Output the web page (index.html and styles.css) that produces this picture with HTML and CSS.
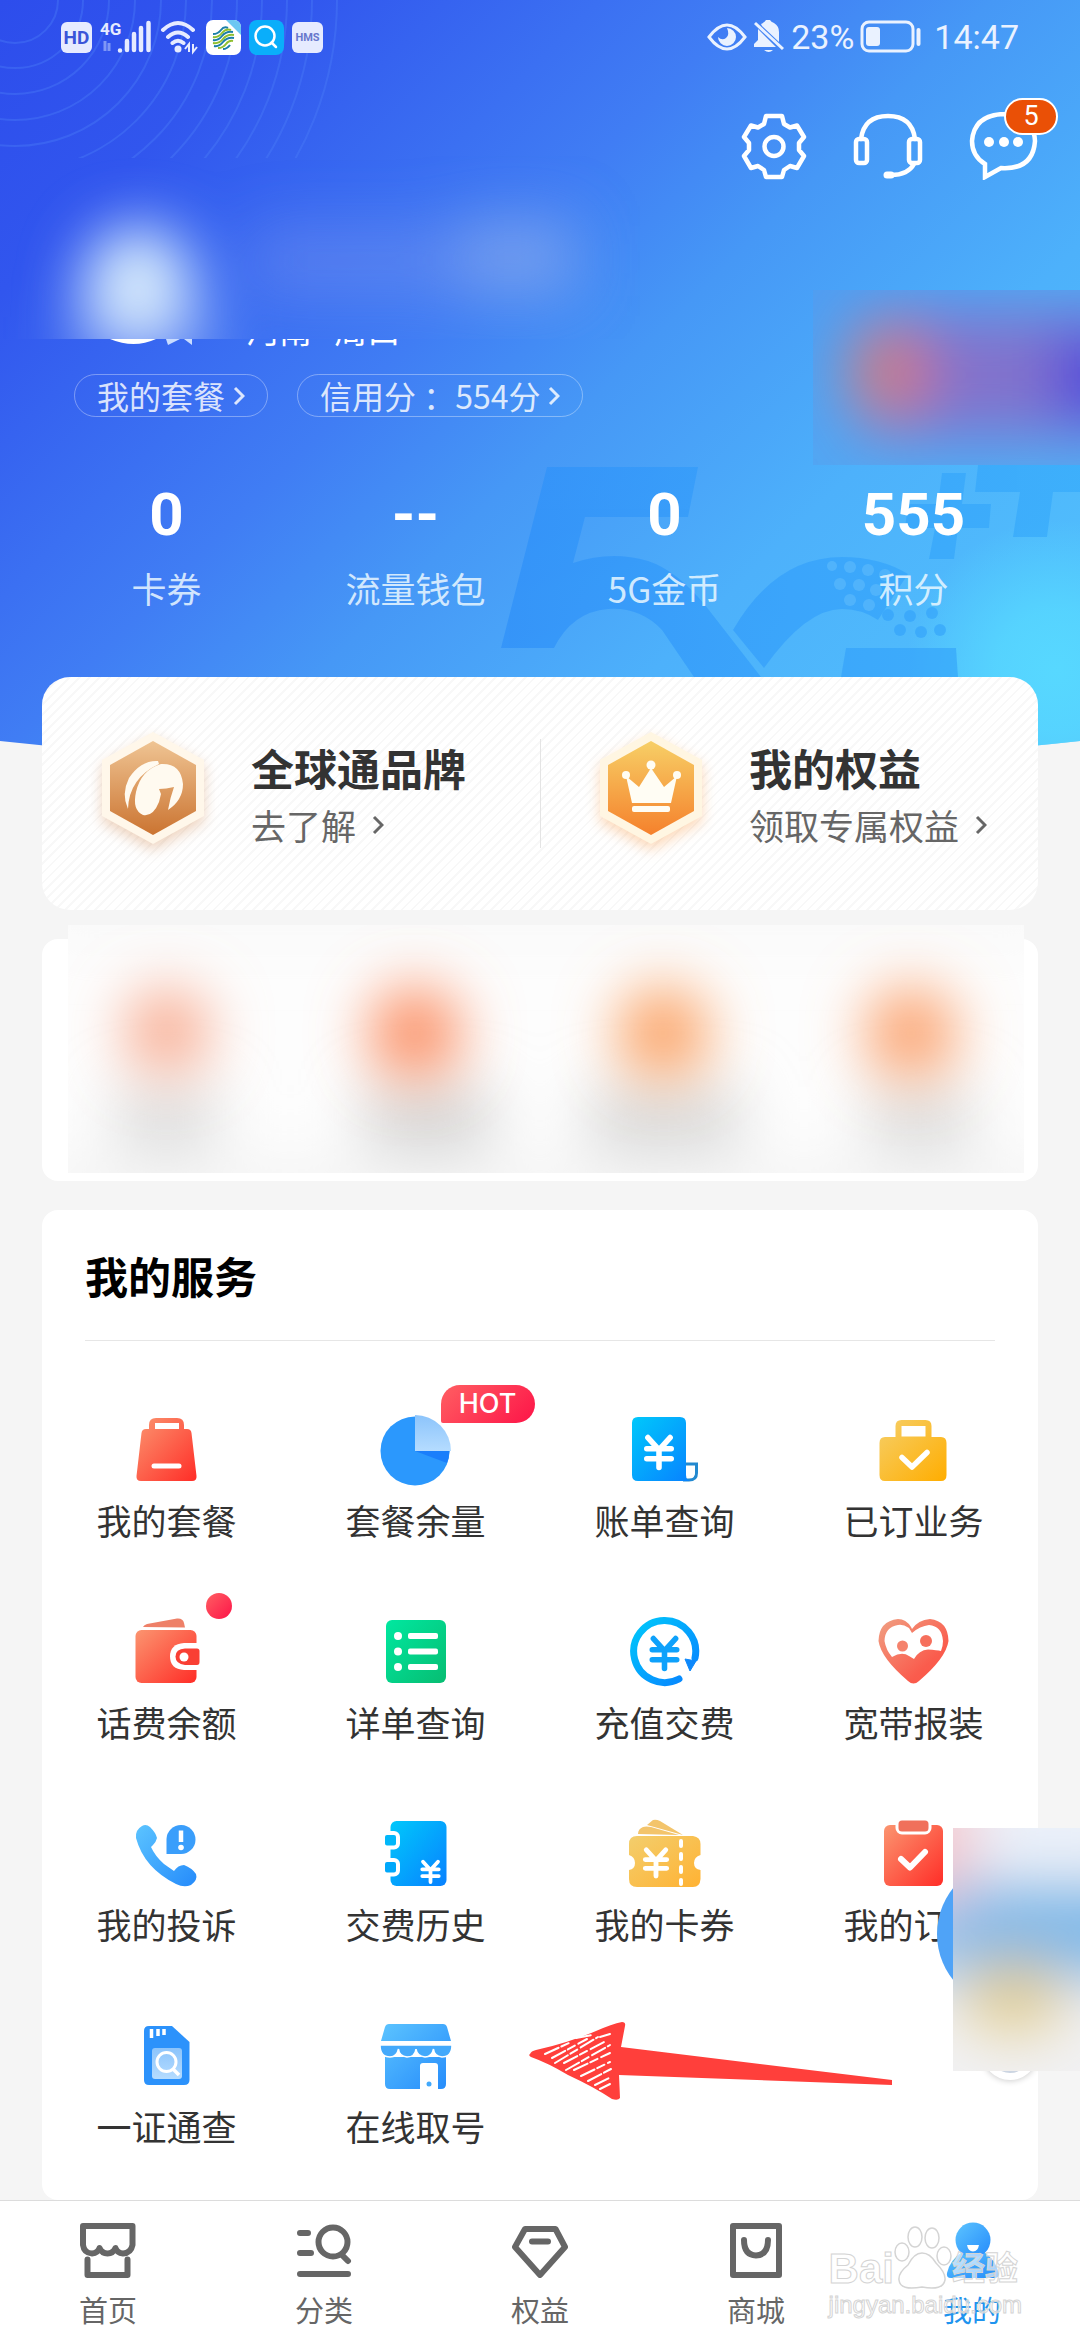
FILE: index.html
```html
<!DOCTYPE html>
<html lang="zh-CN">
<head>
<meta charset="utf-8">
<meta name="viewport" content="width=device-width, initial-scale=1">
<title>我的</title>
<link rel="stylesheet" href="styles.css">
</head>
<body>
<svg class="defs" width="0" height="0" aria-hidden="true">
  <defs>
    <linearGradient id="red" x1="0" y1="0" x2="1" y2="1"><stop offset="0" stop-color="#fb9570"/><stop offset="1" stop-color="#ff2d27"/></linearGradient>
    <linearGradient id="coral" x1="0" y1="0" x2="1" y2="1"><stop offset="0" stop-color="#f0a083"/><stop offset=".7" stop-color="#fa5c4d"/><stop offset="1" stop-color="#fb5446"/></linearGradient>
    <linearGradient id="blue" x1="0" y1="0" x2="1" y2="1"><stop offset="0" stop-color="#00c8fb"/><stop offset="1" stop-color="#0881ff"/></linearGradient>
    <linearGradient id="sky" x1="0" y1="0" x2="1" y2="1"><stop offset="0" stop-color="#5cc4ff"/><stop offset="1" stop-color="#258bfb"/></linearGradient>
    <linearGradient id="pale" x1="0" y1="0" x2="0" y2="1"><stop offset="0" stop-color="#8cc4fb"/><stop offset="1" stop-color="#b5dcff"/></linearGradient>
    <linearGradient id="gold" x1="0" y1="0" x2="1" y2="1"><stop offset="0" stop-color="#f6cf68"/><stop offset="1" stop-color="#ffad00"/></linearGradient>
    <linearGradient id="amber" x1="0" y1="0" x2="1" y2="1"><stop offset="0" stop-color="#f3ce6d"/><stop offset="1" stop-color="#ffb233"/></linearGradient>
    <linearGradient id="green" x1="0" y1="0" x2="1" y2="1"><stop offset="0" stop-color="#00e8a0"/><stop offset="1" stop-color="#07bd72"/></linearGradient>
    <linearGradient id="bronze" x1="0" y1="0" x2="0" y2="1"><stop offset="0" stop-color="#efc493"/><stop offset="1" stop-color="#cb7431"/></linearGradient>
    <linearGradient id="crown" x1="0" y1="0" x2="0" y2="1"><stop offset="0" stop-color="#f7cf66"/><stop offset="1" stop-color="#f5812c"/></linearGradient>
    <linearGradient id="mark" gradientUnits="userSpaceOnUse" x1="500" y1="0" x2="1080" y2="0"><stop offset="0" stop-color="#2d8ff9"/><stop offset=".5" stop-color="#34a0fb"/><stop offset="1" stop-color="#36abfb"/></linearGradient>
    <filter id="haze" x="-150%" y="-150%" width="400%" height="400%"><feGaussianBlur stdDeviation="30"/></filter>
    <symbol id="yen" viewBox="-16 -18 32 36"><path d="M-10 -13 0 -2 10 -13M0 -2V14M-11 -3H11M-11 6H11" fill="none" stroke="currentColor" stroke-width="5" stroke-linecap="round"/></symbol>
  </defs>
</svg>

<div class="page">
  <svg class="backdrop" viewBox="0 0 1080 760" aria-hidden="true">
    <defs>
      <linearGradient id="sea" gradientUnits="userSpaceOnUse" x1="0" y1="0" x2="920" y2="920">
        <stop offset="0" stop-color="#2d4dec"/><stop offset=".16" stop-color="#3156ee"/><stop offset=".41" stop-color="#407df4"/><stop offset=".54" stop-color="#4698f6"/><stop offset=".72" stop-color="#4db1fb"/><stop offset="1" stop-color="#52c4fd"/>
      </linearGradient>
      <radialGradient id="glow" gradientUnits="userSpaceOnUse" cx="1056" cy="670" r="150"><stop offset="0" stop-color="#57d8ff"/><stop offset=".4" stop-color="#57d8ff" stop-opacity=".8"/><stop offset="1" stop-color="#57d8ff" stop-opacity="0"/></radialGradient>
      <clipPath id="ringclip"><rect width="345" height="158"/></clipPath>
      <clipPath id="sheet"><path d="M0 0H1080V741Q540 800 0 741Z"/></clipPath>
    </defs>
    <g clip-path="url(#sheet)">
      <rect width="1080" height="800" fill="url(#sea)"/>
      <rect width="1080" height="800" fill="url(#glow)"/>
      <g fill="url(#mark)" opacity=".7">
        <path d="M547 467H698L688 517H585L573 563Q611 550 648 561Q676 570 705 605L761 677H694L662 630Q640 607 608 609Q572 612 554 648H501Z"/>
        <path d="M733 630Q775 557 842 557Q880 557 908 574L878 620Q862 609 842 609Q806 609 764 668Z"/>
        <path d="M846 648H956L958 677H841Z"/>
        <path d="M978 465H1080V492H1053L1047 537H1013L1020 492H975Z"/>
        <path d="M942 473H966L962 504H991L989 528H958L954 559H929L935 528H905L908 504H938Z"/>
        <circle cx="888" cy="615" r="6"/><circle cx="910" cy="616" r="6"/><circle cx="932" cy="613" r="6"/><circle cx="900" cy="630" r="6"/><circle cx="921" cy="632" r="6"/><circle cx="940" cy="630" r="6"/>
      </g>
      <g fill="#59b9fc" opacity=".7"><circle cx="832" cy="566" r="5"/><circle cx="850" cy="567" r="6"/><circle cx="868" cy="570" r="6"/><circle cx="885" cy="575" r="6"/><circle cx="840" cy="584" r="6"/><circle cx="859" cy="585" r="6"/><circle cx="876" cy="590" r="6"/><circle cx="850" cy="600" r="6"/><circle cx="869" cy="605" r="6"/></g>
      <g clip-path="url(#ringclip)" fill="none" stroke="#4a7cf8" stroke-opacity=".4" stroke-width="2">
        <circle cx="15" cy="0" r="43"/><circle cx="15" cy="0" r="68"/><circle cx="15" cy="0" r="94"/><circle cx="15" cy="0" r="120"/><circle cx="15" cy="0" r="146"/><circle cx="15" cy="0" r="171"/><circle cx="15" cy="0" r="197"/><circle cx="15" cy="0" r="222"/><circle cx="15" cy="0" r="247"/><circle cx="15" cy="0" r="272"/><circle cx="15" cy="0" r="297"/><circle cx="15" cy="0" r="322"/>
      </g>
    </g>
  </svg>

  <header class="hero">
    <div class="status">
      <div class="status__side status__side--left">
        <span class="chip chip--hd">HD</span>
        <svg width="52" height="36" viewBox="0 0 52 36"><text x="0" y="16" class="net">4G</text><path d="M5 22v10M9 32V24" stroke="#7f97f6" stroke-width="3"/><path d="M20 31.500v.1M27 31v-9M34 31v-16M41 31v-22M48.500 31v-27" stroke="#e6ebff" stroke-width="4.500" stroke-linecap="round"/></svg>
        <svg width="38" height="36" viewBox="0 0 38 36"><g fill="none" stroke="#e6ebff" stroke-width="4" stroke-linecap="round"><path d="M3 11Q18 -3 33 11M8 18Q18 9 28 18M12.500 24Q18 19.500 23.500 24"/></g><circle cx="18" cy="30" r="3.500" fill="#e6ebff"/><path d="M29 33v-8l-4 5M33 25v8l4-5" stroke="#e6ebff" stroke-width="2" fill="none"/></svg>
        <svg width="35" height="35" viewBox="0 0 35 35"><rect width="35" height="35" rx="7" fill="#fff"/><path d="M20 0h8a7 7 0 0 1 7 7v8Z" fill="#6cc7f2"/><g fill="none" stroke-width="2"><path d="M7 14Q12 14 15 10T22 8M7 20Q12 21 16 16T27 12M8 26Q13 27 17 22T28 18M17 29Q21 29 24 25" stroke="#1b7fa8"/><path d="M7 17Q12 18 16 13T25 10M7 23Q13 24 17 19T28 15M12 28Q17 28 20 24T27 21" stroke="#8fbf2f"/></g></svg>
        <svg width="35" height="35" viewBox="0 0 35 35"><rect width="35" height="35" rx="8" fill="#0aaefa"/><circle cx="16" cy="16" r="9.500" fill="none" stroke="#fff" stroke-width="2.500"/><path d="M22.500 22.500 27 27" stroke="#fff" stroke-width="2.500" stroke-linecap="round"/></svg>
        <span class="chip chip--hms">HMS</span>
      </div>
      <div class="status__side">
        <svg width="40" height="30" viewBox="0 0 40 30"><path d="M2 15Q20 -9 38 15Q20 39 2 15Z" fill="none" stroke="#eaf2ff" stroke-width="3"/><path d="M20 6a9 9 0 1 1-9 9q4 4 8 1t1-10Z" fill="#eaf2ff"/></svg>
        <svg width="32" height="34" viewBox="0 0 32 34"><path d="M8 4Q12 2 13 0h4q1 2 4 3 5 3 5 9v10L9 6ZM5 9 23 27H1v-3l4-4ZM11 30h9q-4 4-9 0Z" fill="#eaf2ff"/><path d="M2 3 30 29" stroke="#eaf2ff" stroke-width="3"/></svg>
        <span class="status__text">23%</span>
        <svg width="62" height="34" viewBox="0 0 62 34"><rect x="2" y="2" width="51" height="29" rx="7" fill="none" stroke="#eaf2ff" stroke-width="3"/><rect x="6" y="7" width="14" height="19" rx="3" fill="#eaf2ff"/><path d="M58.500 10v14" stroke="#eaf2ff" stroke-width="4" stroke-linecap="round"/></svg>
        <time class="status__text">14:47</time>
      </div>
    </div>

    <div class="actions">
      <button type="button" class="icon-btn" aria-label="设置"><svg width="68" height="68" viewBox="0 0 68 68" fill="none" stroke="#fff" stroke-width="4.500" stroke-linejoin="round"><path d="M26 4H42L44 12L50 15.500L57 13.500L64 25L59 31V38L64 44L57 56L50 54L44 58L42 65H26L24 58L18 54L11 56L4 44L9 38V31L4 25L11 13.500L18 15.500L24 12Z"/><circle cx="34" cy="34.500" r="9.500"/></svg></button>
      <button type="button" class="icon-btn" aria-label="客服"><svg width="72" height="68" viewBox="0 0 72 68" fill="none" stroke="#fff" stroke-width="4.500" stroke-linecap="round"><path d="M9 27Q12 4 36 4T63 27"/><rect x="4" y="27" width="11" height="24" rx="3"/><rect x="57" y="27" width="11" height="24" rx="3"/><path d="M62 52Q56 63 39 63"/><path d="M35 63h4" stroke-width="7"/></svg></button>
      <button type="button" class="icon-btn" aria-label="消息"><svg width="72" height="68" viewBox="0 0 72 68"><path d="M17 52Q4 44 4 29Q6 3 36 2Q66 4 67 29Q65 58 33 56L17 65Z" fill="none" stroke="#fff" stroke-width="4.500"/><g fill="#fff"><circle cx="21" cy="30" r="5"/><circle cx="36" cy="30" r="5"/><circle cx="50" cy="30" r="5"/></g></svg><span class="count">5</span></button>
    </div>

    <div class="profile">
      <svg class="profile__haze" viewBox="0 0 640 183" width="640" height="183" aria-hidden="true"><g filter="url(#haze)"><ellipse cx="138" cy="132" rx="56" ry="62" fill="#d8ecfc"/><rect x="70" y="160" width="150" height="60" fill="#b4c8f8" opacity=".4"/><rect x="250" y="70" width="330" height="70" fill="#8a9eee" opacity=".35"/><rect x="460" y="60" width="110" height="80" fill="#96b9eb" opacity=".4"/></g></svg>
      <svg class="promo-haze" viewBox="0 0 267 175" width="267" height="175" aria-hidden="true"><rect width="267" height="175" fill="#5b9ae8" opacity=".4"/><g filter="url(#haze)"><rect x="50" y="24" width="280" height="122" fill="#8272cc"/><ellipse cx="76" cy="82" rx="40" ry="48" fill="#d07a80"/><rect x="245" y="50" width="80" height="75" fill="#4442dc"/></g></svg>
    </div>
    <div class="place">
      <svg width="100" height="10" viewBox="0 0 100 10" aria-hidden="true"><path d="M10 0H56Q34 10 10 0Z" fill="#fff"/><path d="M66 0H92V6L84 0H80L68 6Z" fill="#c9dcff"/></svg>
      <span class="place__text">河南&nbsp;&nbsp; 周口</span>
    </div>
    <div class="pills">
      <a class="pill" href="#plan">我的套餐<svg width="12" height="20" viewBox="0 0 12 20"><path d="M2 2 10 10 2 18"/></svg></a>
      <a class="pill" href="#credit">信用分 ：554分<svg width="12" height="20" viewBox="0 0 12 20"><path d="M2 2 10 10 2 18"/></svg></a>
    </div>
    <ul class="stats">
      <li><a href="#coupon"><b>0</b><span>卡券</span></a></li>
      <li><a href="#wallet"><b>--</b><span>流量钱包</span></a></li>
      <li><a href="#coin"><b>0</b><span>5G金币</span></a></li>
      <li><a href="#points"><b>555</b><span>积分</span></a></li>
    </ul>
  </header>

  <main class="main">
    <section class="brand">
      <a class="brand__item" href="#brand">
        <svg class="hex hex--bronze" width="120" height="124" viewBox="0 0 120 124"><path d="M60 6 111 34V90L60 118 9 90V34Z" fill="#fff7ea"/><path d="M60 15 103 39V85L60 109 17 85V39Z" fill="url(#bronze)"/><path d="M65 35Q48 34 36 52Q28 68 35 83Q36 52 66 38Z" fill="#fffaf0"/><path d="M68 38Q48 44 43 66Q39 84 50 89Q60 91 66 76L68 68L66 63Q73 63 81 61Q77 72 75 84Q90 74 90 58Q88 37 68 38Z" fill="#fffaf0"/></svg>
        <span class="brand__text"><strong>全球通品牌</strong><span>去了解<svg width="12" height="20" viewBox="0 0 12 20"><path d="M2 2 10 10 2 18"/></svg></span></span>
      </a>
      <a class="brand__item" href="#rights">
        <svg class="hex hex--gold" width="120" height="124" viewBox="0 0 120 124"><path d="M60 6 111 34V90L60 118 9 90V34Z" fill="#fff6e2"/><path d="M60 15 103 39V85L60 109 17 85V39Z" fill="url(#crown)"/><g fill="#fffdf4"><path d="M35 50 48 61 60 42 73 61 86 50 80 77H41Z"/><circle cx="35" cy="49" r="4"/><circle cx="60" cy="39" r="4.500"/><circle cx="86" cy="49" r="4"/><rect x="41" y="80" width="38" height="6" rx="2"/></g></svg>
        <span class="brand__text"><strong>我的权益</strong><span>领取专属权益<svg width="12" height="20" viewBox="0 0 12 20"><path d="M2 2 10 10 2 18"/></svg></span></span>
      </a>
    </section>

    <section class="masked">
      <svg class="masked__haze" viewBox="0 0 956 248" preserveAspectRatio="none" aria-hidden="true">
        <rect width="956" height="248" fill="#fdfdfd"/>
        <g filter="url(#haze)">
          <rect x="-40" y="-30" width="1036" height="44" fill="#f8f8f8"/><rect x="-40" y="238" width="1036" height="50" fill="#f3f3f3"/>
          <rect x="48" y="164" width="100" height="60" fill="#dadada"/><rect x="296" y="164" width="128" height="60" fill="#d2d2d2"/><rect x="520" y="164" width="152" height="60" fill="#d6d6d6"/><rect x="800" y="164" width="104" height="60" fill="#dadada"/>
        </g>
        <g filter="url(#haze)"><circle cx="99" cy="106" r="42" fill="#f8a88c"/><circle cx="347" cy="108" r="46" fill="#fb8c60"/><circle cx="595" cy="108" r="46" fill="#fba062"/><circle cx="843" cy="108" r="46" fill="#fba06c"/></g>
      </svg>
    </section>

    <section class="services">
      <h2>我的服务</h2>
      <ul class="grid">
        <li><a href="#s1"><span class="ico"><svg viewBox="0 0 72 72"><path fill-rule="evenodd" d="M18 15V11Q18 4 25 4H46Q53 4 53 11V15H56Q60 15 60.500 19L65.500 62Q66 67 61 67H10Q5 67 5.500 62L10.500 19Q11 15 15 15ZM24 9V15H48V9Z" fill="url(#red)"/><path d="M23 52H48" stroke="#fff" stroke-width="5" stroke-linecap="round"/></svg></span>我的套餐</a></li>
        <li><a href="#s2"><span class="ico"><svg viewBox="0 0 72 72"><circle cx="35" cy="37" r="34.500" fill="#2b98fd"/><path d="M35 37H69.500Q69 44 67 49Z" fill="#1a7efb"/><path d="M35 37V1A36 36 0 0 1 71 37Z" fill="url(#pale)"/></svg><em class="hot">HOT</em></span>套餐余量</a></li>
        <li><a href="#s3"><span class="ico"><svg viewBox="0 0 72 72"><path d="M57 50H67.500V59Q67.500 66 60 66H54" fill="#fff" stroke="#2389cf" stroke-width="3"/><path d="M9 3H51Q57 3 57 9V61Q57 67 63 67H9Q3 67 3 61V9Q3 3 9 3Z" fill="url(#blue)"/><path d="M58 52H66V58Q65 64 62 64Q58 63 58 58Z" fill="#fff"/><use href="#yen" x="12" y="18" width="36" height="40" color="#fff"/></svg></span>账单查询</a></li>
        <li><a href="#s4"><span class="ico"><svg viewBox="0 0 72 72"><path fill-rule="evenodd" d="M17.500 23V12Q17.500 6 23.500 6H47.500Q53.500 6 53.500 12V23H63Q68.500 23 68.500 29V61Q68.500 67 63 67H7Q1.500 67 1.500 61V29Q1.500 23 7 23ZM23.500 12V22.500H47.500V12Z" fill="url(#gold)"/><path d="M24 43.500 34 53 49 38.500" fill="none" stroke="#fff" stroke-width="5.500" stroke-linecap="round" stroke-linejoin="round"/></svg></span>已订业务</a></li>

        <li><a href="#s5"><span class="ico"><svg viewBox="0 0 72 72"><path d="M12 11Q13 9 16 8L46 2.500Q52 2 53 7L54 11.500Z" fill="#ee8068"/><rect x="4.500" y="14" width="61" height="53" rx="6" fill="url(#red)"/><path d="M72 27H53Q39 28 39 40.500T53 54H72Z" fill="#fff"/><path d="M66 32.500Q68.500 32.500 68.500 35V46Q68.500 49 66 49H54Q44.500 48 44.500 40.500T54 32.500Z" fill="#f93f34"/><circle cx="53" cy="41" r="4.500" fill="#fff"/></svg><i class="dot"></i></span>话费余额</a></li>
        <li><a href="#s6"><span class="ico"><svg viewBox="0 0 72 72"><rect x="6" y="4" width="60" height="63" rx="6" fill="url(#green)"/><g fill="#fff"><circle cx="18" cy="20" r="4"/><circle cx="18" cy="35.500" r="4"/><circle cx="18" cy="51" r="4"/><rect x="28" y="17" width="30" height="6" rx="2"/><rect x="28" y="32.500" width="30" height="6" rx="2"/><rect x="28" y="48" width="30" height="6" rx="2"/></g></svg></span>详单查询</a></li>
        <li><a href="#s7"><span class="ico"><svg viewBox="0 0 72 72"><path d="M50 63A31 31 0 1 1 66 42" fill="none" stroke="url(#blue)" stroke-width="7" stroke-linecap="round"/><path d="M56 43 67 45 61 55Z" fill="#0d88fb" stroke="#0d88fb" stroke-width="1" stroke-linejoin="round"/><use href="#yen" x="17" y="17" width="37" height="40" color="#0ea1fb"/></svg></span>充值交费</a></li>
        <li><a href="#s8"><span class="ico"><svg viewBox="0 0 72 72"><path d="M33 11Q28 3 20 3Q1 5 .5 25Q3 42 30 65Q35.500 70 41 65Q68 42 70.500 25Q70 5 52 3Q40 4 34 13Z" fill="url(#coral)"/><path d="M31 12Q25 8 20 9Q7 11 6.500 25Q8 34 14 41Q24 35 31 40L36 43Q41 34 50 33.500Q59 34 63 35Q65 30 65 25Q64 10 51 9Q42 10 34 17Z" fill="#fff"/><circle cx="24.500" cy="30" r="5.500" fill="#f5836d"/><circle cx="48" cy="25" r="6" fill="#f66f5c"/></svg></span>宽带报装</a></li>

        <li><a href="#s9"><span class="ico"><svg viewBox="0 0 72 72"><path d="M11 8Q15 5.500 19 9Q25 15 26 20Q25 24 22 27L20 29Q24 38 33 46L43 53Q47 47 53 47Q61 50 65 56Q67 62 60 67Q53 70 45 66Q13 50 5 20Q4 12 11 8Z" fill="url(#sky)"/><path d="M35.500 36V21A14.500 14.500 0 1 1 50 36Z" fill="#3a9efb"/><path d="M50 12.500V24" stroke="#fff" stroke-width="4.500"/><circle cx="50" cy="29.500" r="2.800" fill="#fff"/></svg></span>我的投诉</a></li>
        <li><a href="#s10"><span class="ico"><svg viewBox="0 0 72 72"><rect x="10.500" y="3" width="56" height="65" rx="6" fill="url(#blue)"/><g stroke="#fff" stroke-width="4"><rect x="3" y="15" width="15" height="14.500" rx="4" fill="#00b7fa"/><rect x="3" y="42" width="15" height="14.500" rx="4" fill="#00a8fb"/></g><use href="#yen" x="38" y="40" width="25" height="27" color="#fff"/></svg></span>交费历史</a></li>
        <li><a href="#s11"><span class="ico"><svg viewBox="0 0 72 72"><path d="M18 7 24 2Q27 1 31 3L54 17ZM9 16Q9 11 14 9Q17 8 22 9L50 17Z" fill="#f3c46b"/><path d="M8 18H64Q71.500 19 71.500 26V37Q65 39 65 45T71.500 52V61Q71 69 64 69H8Q0 69 0 61V52Q6 51 6 45T0 37V26Q0 18 8 18Z" fill="url(#amber)"/><path d="M52 23v5M52 36v5M52 49v5M52 62v4" stroke="#fff" stroke-width="4" stroke-linecap="round"/><use href="#yen" x="11" y="27" width="32" height="35" color="#fff"/></svg></span>我的卡券</a></li>
        <li><a href="#s12"><span class="ico"><svg viewBox="0 0 72 72"><rect x="6" y="7" width="59" height="61" rx="6" fill="url(#red)"/><rect x="19" y="1" width="33" height="14" rx="5" fill="#f0705b" stroke="#fff" stroke-width="3"/><path d="M23 41 32 49.500 47 34" fill="none" stroke="#fff" stroke-width="6" stroke-linecap="round" stroke-linejoin="round"/></svg></span>我的订单</a></li>

        <li><a href="#s13"><span class="ico"><svg viewBox="0 0 72 72"><path d="M18 6H41L58.500 22V60Q58.500 65 53 65H18Q13 65 13 60V11Q13 6 18 6Z" fill="#2c92fb"/><path d="M20.500 9V18M27 9V16M33 9V15" stroke="#fff" stroke-width="3.500"/><rect x="21" y="28" width="30" height="31" rx="3" fill="url(#pale)"/><circle cx="35.500" cy="42" r="9.500" fill="none" stroke="#fff" stroke-width="3"/><path d="M42 49 48 55" stroke="#fff" stroke-width="3.500"/></svg></span>一证通查</a></li>
        <li><a href="#s14"><span class="ico"><svg viewBox="0 0 72 72"><path d="M9 4H63Q66 4 67 7L71 21H1L5 7Q6 4 9 4ZM5 37H66V64Q66 69 61 69H58V46Q58 43 55 43H43Q40 43 40 46V69H10Q5 69 5 64Z" fill="url(#sky)"/><path d="M0 25H72Q72 37 62 37Q54 36 53.500 29Q52 37 45 37Q37 36 36 29Q35 37 27 37Q19 36 18.500 29Q17 37 10 37Q0 37 0 25Z" fill="#43a9fb" stroke="#fff" stroke-width="1.500"/><circle cx="49" cy="64" r="2.500" fill="#43a9fb"/></svg></span>在线取号</a></li>
      </ul>

      <svg class="arrow" width="364" height="82" viewBox="0 0 364 82" aria-hidden="true"><path d="M2 33Q3 30 8 29Q40 22 68 10Q84 3 94 1Q98 1 97 5L93 26L364 59V64L91 54L92 77Q90 80 84 78Q66 66 40 54Q20 42 3 36Q0 34 2 33Z" fill="#ff3f3b"/><g stroke="#fff" stroke-width="2" stroke-linecap="round" stroke-dasharray="15 3 8 4"><path d="M17 33 41 22M24 37 59 18M27 42 70 16M36 42 78 20M38 49 82 24M46 49 82 32M53 55 82 41M60 60 83 48M67 64 83 56M72 68 82 63M48 17 64 14M72 16 82 13"/></g></svg>

      <div class="floater" aria-hidden="true">
        <i class="floater__ball"></i><i class="floater__close"></i>
        <svg class="floater__haze" width="127" height="243" viewBox="0 0 127 243"><rect width="127" height="243" fill="#f1f1f3"/><g filter="url(#haze)"><rect x="-60" y="-40" width="80" height="120" fill="#f5c6cc"/><rect x="20" y="-30" width="170" height="60" fill="#eaf1fc"/><rect x="0" y="56" width="220" height="92" fill="#7fb8e8"/><rect x="-60" y="76" width="70" height="70" fill="#9cc4ec"/><ellipse cx="60" cy="168" rx="52" ry="38" fill="#e2cd90"/></g></svg>
      </div>
    </section>
  </main>

  <nav class="tabs">
    <a href="#home"><svg viewBox="0 0 56 56"><path d="M3 4H52.500V23Q51 31 43 31.500Q37 31 35.500 26Q33 31.500 27.500 31.500T19.500 26Q18 31 12 31.500Q4 31 3 23ZM7.500 37.500V53H47.500V37.500"/></svg>首页</a>
    <a href="#category"><svg viewBox="0 0 56 56"><path d="M4 11H12M4 31H15M4 52H52M46 33 52 39"/><circle cx="37" cy="20" r="14.500"/></svg>分类</a>
    <a href="#benefit"><svg viewBox="0 0 56 56"><path d="M13 7H43.500L53 25 28 53 3 25ZM20 19.500H36"/></svg>权益</a>
    <a href="#mall"><svg viewBox="0 0 56 56"><path d="M5 4H51V53H5ZM16 18Q16 33 28 33.500Q40 33 40 18"/></svg>商城</a>
    <a href="#me" class="is-active" aria-current="page"><svg viewBox="0 0 56 56" class="solid"><path d="M18 30H40Q52 38 55 52Q55 56 50 56H7Q2 56 3 51Q6 38 18 30Z"/><circle cx="29" cy="18" r="17.500"/><path d="M23 23H35Q34 29 29 29.500Q24 29 23 23Z" fill="#fff"/></svg>我的</a>
    <div class="watermark" aria-hidden="true">
      <div class="watermark__logo"><span>Bai</span><svg width="58" height="66" viewBox="0 0 58 66"><g fill="#fff" fill-opacity=".6" stroke="#d4d4d4" stroke-width="1.500"><ellipse cx="8" cy="27" rx="7" ry="9"/><ellipse cx="21" cy="12" rx="7" ry="10"/><ellipse cx="38" cy="13" rx="7" ry="10"/><ellipse cx="50" cy="31" rx="7" ry="9"/><path d="M28 28Q36 28 42 38Q52 48 51 55Q49 66 28 62Q6 66 5 55Q4 48 14 40Q20 28 28 28Z"/></g><text x="28" y="58" text-anchor="middle">du</text></svg><span class="watermark__cn">经验</span></div>
      <div class="watermark__url">jingyan.baidu.com</div>
    </div>
  </nav>
</div>
</body>
</html>
```

FILE: styles.css
```css
* { box-sizing: border-box; margin: 0; padding: 0; }

body {
  background: #f5f5f5;
  color: #333;
  font-family: "Noto Sans CJK SC", sans-serif;
}

a { color: inherit; text-decoration: none; }
ul { list-style: none; }
svg { display: block; flex: none; }
.defs { position: absolute; }

.page {
  position: relative;
  display: flex;
  flex-direction: column;
  min-height: 100vh;
  overflow: hidden;
}

.backdrop { position: absolute; top: 0; left: 0; width: 100%; height: auto; overflow: visible; }

/* Header */
.hero { position: relative; color: #fff; }

.status {
  display: flex;
  justify-content: space-between;
  align-items: center;
  height: 74px;
  padding: 0 61px;
}
.status__side { display: flex; align-items: center; gap: 6px; }
.status__side--left { gap: 8px; }
.status__text { font: 34px/40px Roboto, sans-serif; color: #eaf2ff; }
time.status__text { margin-left: 6px; }
.net { font: bold 17px "Liberation Sans Narrow", Roboto, sans-serif; fill: #e6ebff; }

.chip {
  display: flex;
  align-items: center;
  justify-content: center;
  width: 31px;
  height: 31px;
  border-radius: 6px;
  background: #e6ebff;
  color: #3a55d8;
  font: bold 19px/31px Roboto, sans-serif;
}
.chip--hms { font-size: 11px; color: #6878cc; }

.actions {
  display: flex;
  justify-content: flex-end;
  gap: 44px;
  padding: 38px 40px 0 0;
}
.icon-btn { position: relative; border: 0; background: none; cursor: pointer; }
.count {
  position: absolute;
  left: 36px;
  top: -14px;
  width: 54px;
  height: 37px;
  border: 2px solid #fff;
  border-radius: 19px;
  background: #ea5006;
  color: #fff;
  font: 27px/33px Roboto, sans-serif;
  text-align: center;
}

.profile { position: relative; height: 159px; }
.profile__haze { position: absolute; left: 0; bottom: 0; overflow: hidden; }
.promo-haze { position: absolute; right: 0; top: 110px; overflow: hidden; }

.place { display: flex; align-items: flex-end; height: 10px; overflow: hidden; padding-left: 100px; }
.place__text { margin-left: 46px; font-size: 33px; line-height: 40px; }
.place svg { align-self: flex-start; }

.pills { display: flex; gap: 29px; padding: 25px 74px 0; }
.pill {
  display: flex;
  align-items: center;
  gap: 8px;
  height: 43px;
  padding: 0 22px;
  border: 1px solid rgba(255, 255, 255, .35);
  border-radius: 22px;
  color: rgba(255, 255, 255, .82);
  font-size: 32px;
  line-height: 41px;
  white-space: pre;
}
.pill path, .brand__text path { fill: none; stroke: currentColor; stroke-width: 3; }

.stats {
  display: grid;
  grid-template-columns: repeat(4, 1fr);
  padding: 61px 42px 64px;
  text-align: center;
}
.stats b {
  display: block;
  font: bold 60px/74px "Liberation Sans Narrow", Roboto, sans-serif;
}
.stats span {
  display: block;
  margin-top: 11px;
  color: rgba(235, 248, 255, .85);
  font-size: 35px;
  line-height: 50px;
}

/* Cards */
.main {
  position: relative;
  display: flex;
  flex: 1;
  flex-direction: column;
  gap: 29px;
  padding: 0 42px;
}

.brand {
  display: grid;
  grid-template-columns: 1fr 1fr;
  padding: 46px 0;
  border-radius: 28px;
  background: repeating-linear-gradient(135deg, #fff 0 5px, #f8f8f8 5px 7px);
}
.brand__item { position: relative; display: flex; align-items: center; gap: 38px; height: 141px; padding-left: 51px; }
.brand__item + .brand__item::before {
  content: "";
  position: absolute;
  left: 0;
  top: 16px;
  bottom: 16px;
  border-left: 1px solid #e4e4e4;
}
.hex { margin-bottom: 12px; }
.hex--bronze { filter: drop-shadow(0 6px 7px rgba(206, 130, 70, .35)); }
.hex--gold { filter: drop-shadow(0 6px 7px rgba(250, 160, 80, .4)); }
.brand__text { display: flex; flex-direction: column; gap: 2px; padding-top: 4px; }
.brand__text strong { font-size: 43px; line-height: 56px; }
.brand__text > span {
  display: flex;
  align-items: center;
  gap: 16px;
  color: #666;
  font-size: 35px;
  line-height: 56px;
}

.masked { position: relative; height: 242px; border-radius: 16px; background: #fff; }
.masked__haze {
  position: absolute;
  left: 26px;
  top: -14px;
  width: calc(100% - 40px);
  height: 248px;
  overflow: hidden;
}

.services {
  position: relative;
  flex: 1;
  padding-top: 37px;
  border-radius: 16px;
  background: #fff;
}
.services h2 {
  margin: 0 43px;
  padding-bottom: 37px;
  border-bottom: 1px solid #e6e6e6;
  color: #000;
  font-size: 43px;
  line-height: 56px;
}
.grid {
  display: grid;
  grid-template-columns: repeat(4, 1fr);
  row-gap: 72px;
  padding: 73px 0 50px;
}
.grid a {
  display: flex;
  flex-direction: column;
  align-items: center;
  gap: 10px;
  font-size: 35px;
  line-height: 48px;
}
.ico { position: relative; width: 72px; height: 72px; }
.hot {
  position: absolute;
  left: 61px;
  top: -29px;
  width: 94px;
  height: 38px;
  border-radius: 19px 19px 19px 2px;
  background: linear-gradient(135deg, #ff5f62, #fd1448);
  color: #fff;
  font: 500 27px/38px Inter, sans-serif;
  text-align: center;
}
.dot {
  position: absolute;
  left: 75px;
  top: -23px;
  width: 26px;
  height: 26px;
  border-radius: 50%;
  background: linear-gradient(135deg, #ff5f62, #fd1448);
}

/* Items lying over the services card */
.arrow { position: absolute; left: 486px; top: 811px; }
.floater { position: absolute; right: -42px; top: 618px; width: 143px; height: 260px; overflow: hidden; }
.floater__ball {
  position: absolute;
  left: 0;
  top: 32px;
  width: 148px;
  height: 148px;
  border-radius: 50%;
  background: #4fa3f7;
}
.floater__close {
  position: absolute;
  left: 45px;
  top: 196px;
  width: 56px;
  height: 56px;
  border: 7px solid #fff;
  border-radius: 50%;
  background: #ccd5e2;
  box-shadow: 0 1px 6px rgba(0, 0, 0, .2);
}
.floater__haze { position: absolute; right: 0; top: 0; overflow: hidden; }

/* Bottom tabs */
.tabs {
  position: relative;
  display: grid;
  grid-template-columns: repeat(5, 1fr);
  padding: 21px 0 11px;
  border-top: 1px solid #dcdcdc;
  background: #fff;
}
.tabs > a {
  display: flex;
  flex-direction: column;
  align-items: center;
  gap: 11px;
  color: #666;
  font-size: 29px;
  line-height: 40px;
}
.tabs > a > svg {
  width: 56px;
  height: 56px;
  fill: none;
  stroke: currentColor;
  stroke-width: 6;
  stroke-linecap: round;
  stroke-linejoin: round;
}
.tabs > a > .solid { fill: url(#sky); stroke: none; }
.tabs > .is-active { color: #1f94ee; }

.watermark {
  position: absolute;
  right: 58px;
  top: 24px;
  color: rgba(255, 255, 255, .6);
  font-family: "Liberation Sans", "Noto Sans CJK SC", sans-serif;
  -webkit-text-stroke: 1px #d4d4d4;
  pointer-events: none;
}
.watermark__logo { display: flex; align-items: flex-end; font-size: 42px; font-weight: bold; line-height: 44px; }
.watermark__logo text { font-size: 30px; fill: #fff; }
.watermark__cn { font-size: 33px; }
.watermark__url { font-size: 24px; line-height: 28px; }
```
